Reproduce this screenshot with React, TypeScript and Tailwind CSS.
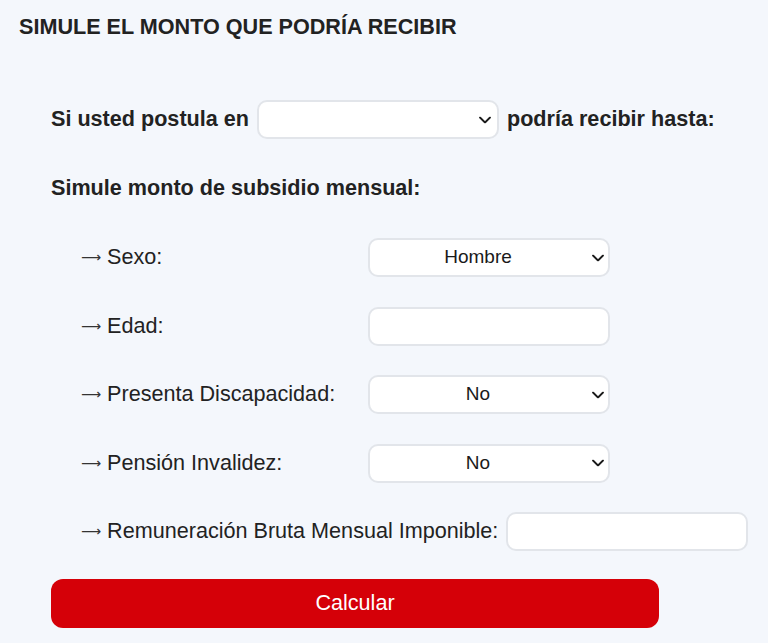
function Chevron({ right }: { right: string }) {
  return (
    <svg
      viewBox="0 0 12 7"
      className={`pointer-events-none absolute top-1/2 h-[7px] w-[12px] -translate-y-1/2 ${right}`}
      fill="none"
      stroke="#1a1a1a"
      strokeWidth="1.8"
      strokeLinecap="round"
      strokeLinejoin="round"
    >
      <polyline points="1,1 6,6 11,1" />
    </svg>
  );
}

function FakeSelect({ value, first }: { value?: string; first?: boolean }) {
  return (
    <div className="relative h-[39px] w-[242px] shrink-0">
      <select
        className="h-full w-full appearance-none rounded-[10px] border-2 border-[#e2e5ea] bg-white pr-[22px] text-center text-[19px] text-[#1a1a1a] outline-none"
        defaultValue={value ?? ""}
      >
        <option value={value ?? ""}>{value ?? ""}</option>
      </select>
      <Chevron right={first ? "right-[8px]" : "right-[6px]"} />
    </div>
  );
}

function TextInput() {
  return (
    <input
      type="text"
      className="h-[39px] w-[242px] shrink-0 rounded-[10px] border-2 border-[#e2e5ea] bg-white px-2 text-[19px] outline-none"
    />
  );
}

const rows: { label: string; field: "select" | "input"; value?: string }[] = [
  { label: "Sexo:", field: "select", value: "Hombre" },
  { label: "Edad:", field: "input" },
  { label: "Presenta Discapacidad:", field: "select", value: "No" },
  { label: "Pensión Invalidez:", field: "select", value: "No" },
  { label: "Remuneración Bruta Mensual Imponible:", field: "input" },
];

export default function App() {
  return (
    <div
      className="min-h-screen bg-[#f4f7fc] px-[19px] pt-[15px] text-[#222]"
      style={{ fontFamily: '"Liberation Sans", Arial, sans-serif' }}
    >
      <h2 className="text-[21.6px] font-bold leading-[24px] text-[#222]">
        SIMULE EL MONTO QUE PODRÍA RECIBIR
      </h2>

      <div className="ml-[32px]">
        <div className="mt-[61px] flex items-center gap-[8px] whitespace-nowrap text-[21.6px] font-bold">
          <span>Si usted postula en</span>
          <FakeSelect first />
          <span>podría recibir hasta:</span>
        </div>

        <p className="mt-[37px] text-[21.6px] font-bold leading-[24px]">
          Simule monto de subsidio mensual:
        </p>

        <div className="mt-[38px] flex flex-col gap-[29.5px] pl-[30px]">
          {rows.map((r) => (
            <div key={r.label} className="flex items-center gap-[8px]">
              <span className="flex min-w-[279px] shrink-0 items-center whitespace-nowrap text-[21.6px] text-[#222]">
                <span className="mr-[6px] font-['DejaVu_Sans',sans-serif] text-[14px] leading-none text-[#333]">
                  ⟶
                </span>
                {r.label}
              </span>
              {r.field === "select" ? <FakeSelect value={r.value} /> : <TextInput />}
            </div>
          ))}
        </div>

        <button className="mt-[28px] h-[49px] w-[608px] rounded-[12px] bg-[#d50008] text-[21.6px] text-white">
          Calcular
        </button>
      </div>
    </div>
  );
}
